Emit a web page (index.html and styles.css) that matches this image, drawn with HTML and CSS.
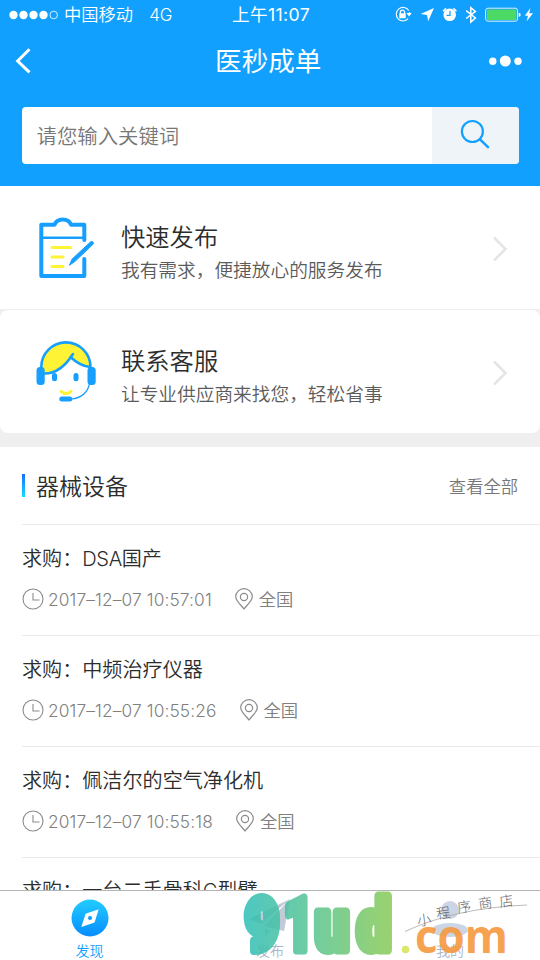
FILE: index.html
```html
<!DOCTYPE html>
<html lang="zh-CN">
<head>
<meta charset="utf-8">
<meta name="viewport" content="width=device-width">
<title>医秒成单</title>
<link rel="stylesheet" href="styles.css">
</head>
<body>
<div class="app">
  <header class="header">
    <div class="status">
      <div class="status-left">
        <svg width="50" height="10" viewBox="0 0 50 10"><g fill="#fff"><circle cx="4.5" cy="5" r="4.2"/><circle cx="14.5" cy="5" r="4.2"/><circle cx="24.5" cy="5" r="4.2"/><circle cx="34.5" cy="5" r="4.2"/></g><circle cx="44.7" cy="5" r="3.8" fill="none" stroke="#fff" stroke-width=".8"/></svg>
        <span class="carrier">中国移动</span><span class="network">4G</span>
      </div>
      <div class="clock">上午11:07</div>
      <svg class="status-icons" width="140" height="22" viewBox="395 4 140 22">
        <g fill="none" stroke="#fff">
          <path d="M408.8 10.5A6.8 6.8 0 1 0 408.2 18.7M409.4 12v3" stroke-width="1.1"/>
          <path d="M400.4 14v-1.7a2.1 2.1 0 0 1 4.2 0V14" stroke-width="1.2"/>
          <path d="M466.2 10.8l9.2 7.4-4.6 4V7.8l4.6 3.8-9.2 7.1" transform="translate(0 -.2)" stroke-width="1.5"/>
          <rect x="485.6" y="8.2" width="32" height="13" rx="2.4" stroke-width="1" stroke="#d9f0ff"/>
        </g>
        <path d="M399.3 13.3h6.4v5h-6.4zM406.4 13h5.4l-2.7 3.5zM434 8l-5.8 13.3-1.2-6.4-6.4-1z" fill="#fff"/>
        <circle cx="449.7" cy="14.8" r="6.3" fill="#fff"/>
        <path d="M443 11.2l3-2.9M456.4 11.2l-3-2.9" stroke="#fff" stroke-width="1.5"/>
        <path d="M450 10.8v4.500h-3.500" fill="none" stroke="#12a0ff" stroke-width="1.2"/>
        <rect x="486.8" y="9.4" width="29.6" height="10.6" rx="1" fill="#4cd964"/>
        <path d="M518.7 12.7q2 0 2 2t-2 2zM530.4 8l-5.5 7.7h3.1l-1.3 5.6 6.3-8h-3.8z" fill="#fff"/>
      </svg>
    </div>
    <div class="nav">
      <svg width="20" height="28" viewBox="0 0 20 28"><path d="M16.500 2.300L4.700 14 16.500 25.300" fill="none" stroke="#fff" stroke-width="3"/></svg>
      <h1 class="nav-title">医秒成单</h1>
      <svg width="34" height="14" viewBox="0 0 34 14" fill="#fff"><circle cx="4.8" cy="7.2" r="3.7"/><circle cx="17.3" cy="7" r="5.5"/><circle cx="30" cy="7.2" r="3.7"/></svg>
    </div>
    <div class="search">
      <span class="placeholder">请您输入关键词</span>
      <div class="search-button"><svg width="34" height="34" viewBox="0 0 34 34" fill="none" stroke="#12a0ff"><circle cx="13.4" cy="13.5" r="10.5" stroke-width="2.2"/><path d="M21 21.4l8 7.8" stroke-width="2.5" stroke-linecap="round"/></svg></div>
    </div>
  </header>

  <section class="actions">
    <div class="action">
      <svg class="action-icon" width="64" height="70" viewBox="34 213 64 70" fill="none" stroke="#169fff" stroke-width="4" stroke-linejoin="round" stroke-linecap="round">
        <path d="M84.300 240V224.700H71c-1-3-3.600-5.200-8.200-5.200s-7.200 2.200-8.200 5.200H41.300V276h43V259"/>
        <path d="M42 237.700h42" stroke-width="2.500"/>
        <path d="M52 247.500h18.500M52 257h11M52 266.500h11" stroke="#fff335" stroke-width="3"/>
        <path d="M90.500 242L91 241.600a1.800 1.800 0 0 1 2.200 2.500L74.500 261.800 69.400 265.200 72 259.300z" fill="#169fff" stroke-width="1"/>
      </svg>
      <div class="action-copy"><h2>快速发布</h2><p>我有需求，便捷放心的服务发布</p></div>
      <svg class="chevron" width="18" height="28" viewBox="0 0 18 28"><path d="M2 2.500L13.500 14 2 25.500" fill="none" stroke="#e5e5e5" stroke-width="2.500"/></svg>
    </div>
    <div class="action second">
      <svg class="action-icon" width="64" height="70" viewBox="34 337 64 70" fill="none" stroke="#169fff" stroke-width="2.600">
        <path d="M41.500 373.500V367a24.500 24.500 0 0 1 49 0Q80 366 70.500 357 59 373.500 41.500 373.500z" fill="#fff335" stroke="none"/>
        <path d="M41.300 372v-5a24.600 24.600 0 0 1 49.200 0v3M43 373.500Q60 374.500 73 354M70.500 357Q80 366 90 367" stroke-linecap="round"/>
        <path d="M89.500 384c-2 8-8 14-18 15" stroke-width="1.200"/>
        <g fill="#169fff" stroke="none"><rect x="36.500" y="367" width="8.200" height="18" rx="3.500"/><rect x="87.500" y="367" width="8.200" height="18" rx="3.500"/><rect x="52" y="373" width="5" height="8.200" rx="2.500"/><rect x="73.500" y="373" width="5" height="8.200" rx="2.500"/><rect x="59.300" y="396.500" width="13" height="5" rx="2.500"/></g>
        <path d="M61 391.300q5 4.500 10 0" stroke="#fff335" stroke-width="3" stroke-linecap="round"/>
      </svg>
      <div class="action-copy"><h2>联系客服</h2><p>让专业供应商来找您，轻松省事</p></div>
      <svg class="chevron" width="18" height="28" viewBox="0 0 18 28"><path d="M2 2.500L13.500 14 2 25.500" fill="none" stroke="#e5e5e5" stroke-width="2.500"/></svg>
    </div>
  </section>

  <svg width="0" height="0" class="symbols">
    <symbol id="clock" viewBox="0 0 22 22"><g fill="none" stroke="#8b8b8b" stroke-width="1.100"><circle cx="11" cy="11" r="10"/><path d="M11 5v7h6.500"/></g></symbol>
    <symbol id="pin" viewBox="0 0 20 22"><g fill="none" stroke="#8b8b8b" stroke-width="1.200"><path d="M10 21C8 18 1.700 13 1.700 8.800a8.300 8.100 0 0 1 16.600 0C18.300 13 12 18 10 21z"/><circle cx="10" cy="9" r="3.600"/></g></symbol>
  </svg>

  <main class="listing">
    <div class="listing-head"><i class="accent"></i><h2>器械设备</h2><span class="more">查看全部</span></div>
    <article class="item"><h3>求购：<span class="latin">DSA</span>国产</h3><div class="meta"><svg class="ic-clock"><use href="#clock"/></svg><span class="date">2017–12–07 10:57:01</span><svg class="ic-pin"><use href="#pin"/></svg><span class="region">全国</span></div></article>
    <article class="item"><h3>求购：中频治疗仪器</h3><div class="meta"><svg class="ic-clock"><use href="#clock"/></svg><span class="date">2017–12–07 10:55:26</span><svg class="ic-pin"><use href="#pin"/></svg><span class="region">全国</span></div></article>
    <article class="item"><h3>求购：佩洁尔的空气净化机</h3><div class="meta"><svg class="ic-clock"><use href="#clock"/></svg><span class="date">2017–12–07 10:55:18</span><svg class="ic-pin"><use href="#pin"/></svg><span class="region">全国</span></div></article>
    <article class="item last"><h3>求购：一台二手骨科C型臂</h3></article>
  </main>

  <nav class="tabs">
    <div class="tab active">
      <svg width="38" height="38" viewBox="0 0 38 38"><defs><linearGradient id="disc" x2="0" y2="1"><stop stop-color="#22ccff"/><stop offset="1" stop-color="#078dff"/></linearGradient></defs><circle cx="19" cy="19" r="18.500" fill="url(#disc)"/><path d="M27.700 10.200L23.500 23.500 10.300 28l4.300-13.300z" fill="#fff"/><circle cx="19" cy="19" r="2" fill="#079fff"/></svg>
      <span>发现</span>
    </div>
    <div class="tab"><svg width="44" height="38" viewBox="0 0 44 38"><path d="M42 0L1 20l12 5zM42 0L16 27l20 5zM17 30v7l6-5z" fill="#c0cad8"/></svg><span>发布</span></div>
    <div class="tab"><svg width="38" height="38" viewBox="0 0 38 38" fill="#ccd5e3"><circle cx="19" cy="11" r="9"/><ellipse cx="19" cy="31" rx="18" ry="7"/></svg><span>我的</span></div>
  </nav>
  <svg class="watermark" width="300" height="76" viewBox="240 884 300 76">
    <defs><linearGradient id="brand" gradientUnits="userSpaceOnUse" x1="243" y1="0" x2="394" y2="0"><stop stop-color="#30bfb8"/><stop offset=".45" stop-color="#58c492"/><stop offset="1" stop-color="#8ccb55"/></linearGradient></defs>
    <g class="brand" font-size="72" stroke-width="9" stroke-linejoin="round" fill="url(#brand)" stroke="url(#brand)">
      <text x="245" y="949.500" textLength="34" lengthAdjust="spacingAndGlyphs">9</text>
      <text x="284" y="949.500" textLength="29" lengthAdjust="spacingAndGlyphs">1</text>
      <text x="315" y="949.500" textLength="34" lengthAdjust="spacingAndGlyphs">u</text>
      <text x="357" y="949.500" textLength="34" lengthAdjust="spacingAndGlyphs">d</text>
    </g>
    <circle cx="405.500" cy="949.500" r="3.800" fill="#dbe76b"/>
    <text class="domain" x="415" y="953" font-size="46" textLength="93" lengthAdjust="spacingAndGlyphs">com</text>
    <path d="M405 931.500Q455 908 527 905" fill="none" stroke="#aaa" stroke-width=".8"/>
    <g class="hand" font-size="14"><text x="418" y="926" transform="rotate(-8 418 926)">小</text><text x="437" y="919" transform="rotate(-8 437 919)">程</text><text x="458" y="913" transform="rotate(-8 458 913)">序</text><text x="479" y="909" transform="rotate(-8 479 909)">商</text><text x="500" y="907" transform="rotate(-8 500 907)">店</text></g>
  </svg>
</div>
</body>
</html>
```
FILE: styles.css
```css
* { box-sizing: border-box; margin: 0; padding: 0; }
body { width: 540px; height: 960px; overflow: hidden; font-family: Inter, "Noto Sans CJK SC", sans-serif; font-weight: 350; color: #2c2c2c; background: #efefef; }
svg { display: block; flex: none; }
h1, h2, h3 { font-weight: 350; white-space: nowrap; }
.app { position: relative; display: flex; flex-direction: column; height: 960px; overflow: hidden; }
.header { flex: none; height: 186px; background: #12a0ff; color: #fff; }
.status { display: grid; grid-template-columns: 200px 140px 1fr; height: 30px; align-items: center; }
.status-left { display: flex; align-items: center; padding-left: 9px; font-size: 17.300px; white-space: nowrap; }
.status span, .clock { line-height: 24px; }
.carrier { margin-left: 5px; }
.status .network { margin-left: 16px; font-size: 17px; }
.clock { padding-left: 2px; text-align: center; font-size: 17.600px; font-weight: 400; white-space: nowrap; letter-spacing: .4px; }
.status-icons { justify-self: end; margin-right: 5px; }
.nav { display: flex; justify-content: space-between; align-items: center; height: 62px; padding: 0 18.500px 0 13px; }
.nav-title { font-size: 26.600px; font-weight: 400; line-height: 36px; margin-left: 16px; }
.search { display: flex; justify-content: space-between; align-items: center; height: 57px; margin: 15px 21.500px 0; padding-left: 15px; border-radius: 4px; background: #fff; overflow: hidden; }
.placeholder { padding-bottom: 2px; font-size: 20.400px; color: #777; }
.search-button { display: flex; align-items: center; justify-content: center; width: 87px; height: 57px; background: #eff4f9; }
.search-button svg { margin: -2px 0 0 2px; }
.actions { flex: none; }
.action { display: flex; align-items: center; height: 123px; padding: 0 30px 0 34px; background: #fff; }
.action.second { margin-top: 1px; border-radius: 8px; }
.action-icon { margin-right: 23px; }
.action-copy { flex: 1; padding-top: 12px; }
.action h2 { font-size: 24.300px; line-height: 34px; }
.action p { font-size: 18.700px; line-height: 34px; color: #5b5b5b; white-space: nowrap; }
.action .chevron { margin-top: 3px; }
.symbols { position: absolute; }
.listing { flex: 1; min-height: 0; margin-top: 14px; padding: 0 22px; overflow: hidden; background: #fff; }
.listing-head { display: flex; align-items: center; height: 77px; }
.accent { width: 3px; height: 23px; background: linear-gradient(#176eff, #16dbff); }
.listing-head h2 { margin-left: 11px; padding-bottom: 2px; font-size: 23px; }
.more { margin-left: auto; font-size: 17.300px; color: #777; }
.item { height: 111px; margin-right: -22px; padding-top: 18px; border-top: 1px solid #eaeaea; }
.item.last { padding-top: 17px; }
.item h3 { font-size: 20.100px; line-height: 32px; }
.latin { letter-spacing: -.4px; }
.meta { display: flex; align-items: center; height: 26px; margin-top: 11px; font-size: 17.300px; color: #808080; }
.date { letter-spacing: .13px; }
.ic-clock { width: 22px; height: 22px; margin-right: 4px; }
.ic-pin { width: 20px; height: 22px; margin: 0 4.500px 0 22.500px; }
.region { padding-bottom: 1px; }
.tabs { flex: none; display: grid; grid-template-columns: repeat(3, 180px); height: 70px; border-top: 1px solid #b5b5b5; background: #fff; }
.tab { display: flex; flex-direction: column; align-items: center; padding-top: 8px; font-size: 14px; line-height: 20px; color: #a9b6c8; }
.tab span { margin-top: 4px; }
.active { padding-right: 1px; color: #129fff; }
.watermark { position: absolute; left: 240px; top: 884px; }
.brand { font-family: Roboto, sans-serif; font-weight: 900; opacity: .86; }
.domain { font-family: "Open Sans", sans-serif; font-weight: 700; fill: #f6993f; opacity: .9; }
.hand { font-family: "Noto Sans CJK SC", sans-serif; font-weight: 300; fill: #666; }
```
